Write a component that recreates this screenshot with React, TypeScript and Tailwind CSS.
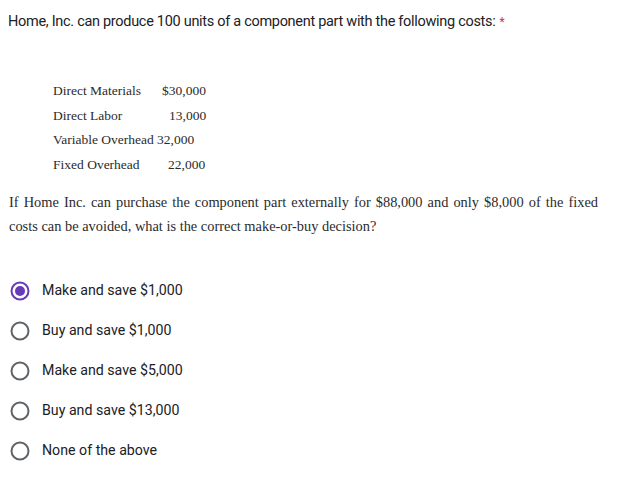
import React from 'react';

const costs = [
  { label: 'Direct Materials', value: '$30,000', pad: 'pl-[5px]' },
  { label: 'Direct Labor', value: '13,000', pad: 'pl-[12px]' },
  { label: 'Variable Overhead', value: '32,000', pad: 'pl-0' },
  { label: 'Fixed Overhead', value: '22,000', pad: 'pl-[11px]' },
];

const options = [
  'Make and save $1,000',
  'Buy and save $1,000',
  'Make and save $5,000',
  'Buy and save $13,000',
  'None of the above',
];

const Radio: React.FC<{ checked: boolean }> = ({ checked }) => (
  <svg width="20" height="20" viewBox="0 0 20 20" className="shrink-0">
    <circle
      cx="10"
      cy="10"
      r="8.5"
      fill="none"
      stroke={checked ? '#673ab7' : '#5f6368'}
      strokeWidth="2"
    />
    {checked && <circle cx="10" cy="10" r="5" fill="#673ab7" />}
  </svg>
);

export default function App() {
  return (
    <div className="w-[621px] min-h-[485px] bg-white">
      <div className="px-2 pt-[10px] text-[14.5px] tracking-[-0.3px] leading-6 text-[#202124] font-['Roboto',sans-serif]">
        Home, Inc. can produce 100 units of a component part with the following costs:
        <span className="text-[#d93025] text-[12px] align-top ml-1">*</span>
      </div>

      <div className="pl-[53px] pt-[45px] font-['Liberation_Serif',serif] text-[13.5px] text-[#2b2b2b]">
        {costs.map((c) => (
          <div key={c.label} className="flex h-[24.5px] items-center whitespace-nowrap">
            <span className="w-[104px] shrink-0">{c.label}</span>
            <span className={c.pad}>{c.value}</span>
          </div>
        ))}
      </div>

      <p className="px-[9px] pt-[13px] w-[607px] text-justify font-['Liberation_Serif',serif] text-[14.4px] leading-6 text-[#2b2b2b]">
        If Home Inc. can purchase the component part externally for $88,000 and only $8,000 of the fixed costs can be avoided, what is the correct make-or-buy decision?
      </p>

      <div className="pt-[33px] flex flex-col font-['Roboto',sans-serif] text-[14.2px] text-[#202124]">
        {options.map((o, i) => (
          <div key={o} className="flex items-center h-10 pl-[10px] gap-3">
            <Radio checked={i === 0} />
            <span>{o}</span>
          </div>
        ))}
      </div>
    </div>
  );
}
